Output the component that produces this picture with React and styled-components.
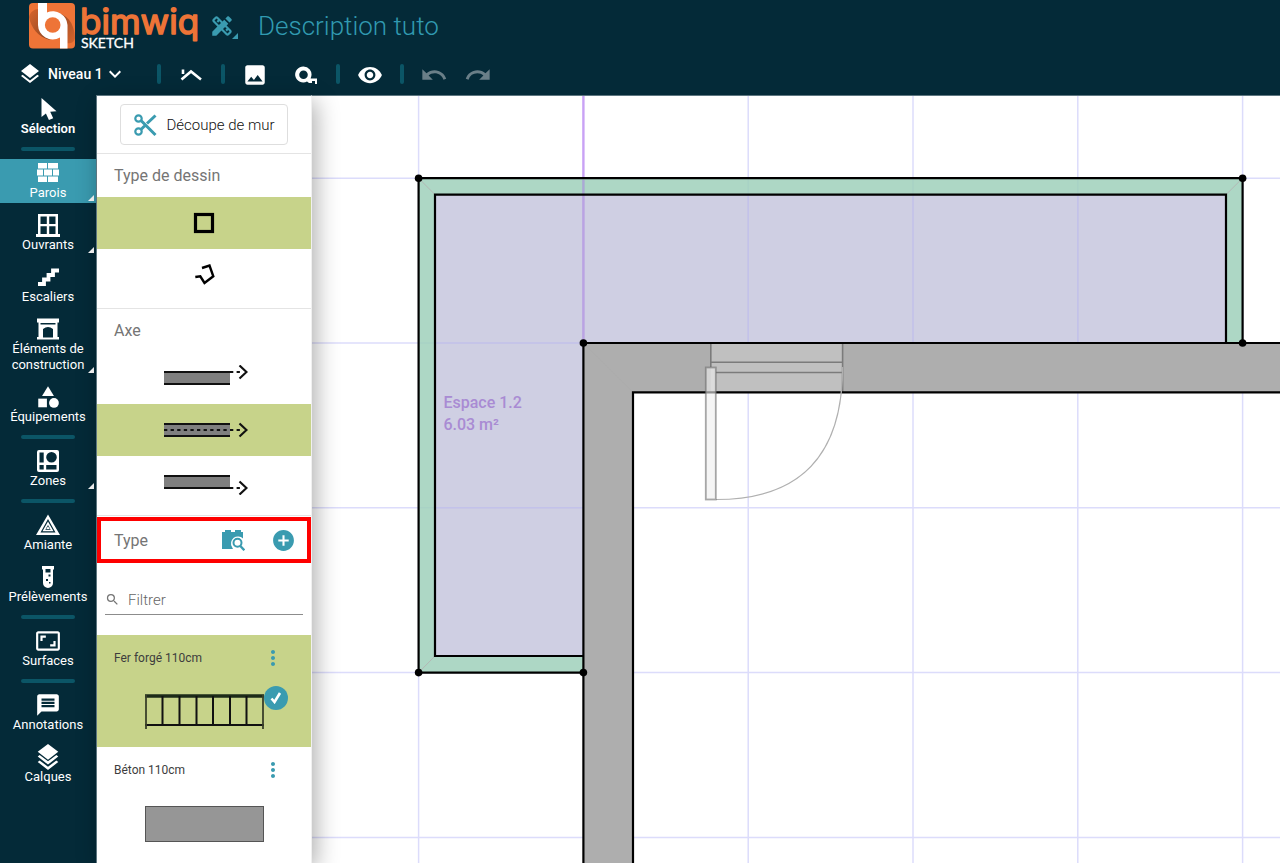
import { useState } from 'react'
import styled, { createGlobalStyle } from 'styled-components'
import {
    MdAddCircle,
    MdCategory,
    MdDesignServices,
    MdExpandMore,
    MdImage,
    MdLayers,
    MdMessage,
    MdMoreVert,
    MdOutlineAspectRatio,
    MdRedo,
    MdSearch,
    MdUndo,
    MdVisibility
} from 'react-icons/md'

const colors = {
    navy: '#042a38',
    teal: '#3a9bb0',
    tealDark: '#0b5566',
    orange: '#ee7437',
    green: '#c7d38a',
    grey: '#757575',
    line: '#e4e4e4',
    edge: '#5d7680'
}

const GlobalStyle = createGlobalStyle`
    *{
        box-sizing:border-box;
    }
    body{
        margin:0;
        overflow:hidden;
        font-family:Roboto, "Liberation Sans", sans-serif;
        font-size:14px;
        background:#fff;
    }
    button{
        font:inherit;
        color:inherit;
        border:none;
        background:none;
        padding:0;
        cursor:pointer;
    }
    svg{
        display:block;
        flex-shrink:0;
    }
`

const Page = styled.div`
    display:flex;
    flex-direction:column;
    height:100vh;
`
const Body = styled.div`
    display:flex;
    flex:1;
    min-height:0;
`

/* header */
const Header = styled.header`
    display:flex;
    flex-direction:column;
    color:#fff;
    background:${colors.navy};
`
const TopRow = styled.div`
    display:flex;
    align-items:center;
    gap:8px;
    height:52px;
    padding-left:29px;
`
const Logo = styled.a`
    display:flex;
    color:#fff;
    text-decoration:none;
`
const ModeButton = styled.button`
    position:relative;
    color:${colors.teal};
    padding-right:3px;
`
const Title = styled.h1`
    margin:0;
    margin-left:12px;
    font-size:26px;
    font-weight:300;
    color:#319ab1;
`
const Toolbar = styled.div`
    display:flex;
    align-items:center;
    gap:18px;
    height:43px;
    padding-left:18px;
`
const Group = styled.div`
    display:flex;
    align-items:center;
    gap:${props => props.$gap || 0}px;
`
const LevelButton = styled.button`
    display:flex;
    align-items:center;
    padding-right:12px;
    font-weight:500;
    span{
        margin-left:6px;
    }
`
const Separator = styled.span`
    width:4px;
    height:20px;
    border-radius:2px;
    background:${colors.tealDark};
`
const ToolButton = styled.button`
    display:flex;
    align-items:center;
    justify-content:center;
    width:24px;
    padding-top:2px;
    color:#fff;
    &:disabled{
        color:#6a7f88;
    }
`

/* left menu */
const Menu = styled.nav`
    display:flex;
    flex-direction:column;
    gap:8px;
    width:96px;
    flex-shrink:0;
    color:#fff;
    background:${colors.navy};
`
const MenuButton = styled.button`
    position:relative;
    display:flex;
    flex-direction:column;
    align-items:center;
    padding:2px 0;
    font-size:13px;
    line-height:16px;
    font-weight:${props => props.$bold ? 600 : 400};
    background:${props => props.$active ? colors.teal : 'transparent'};
`
const MenuIcon = styled.span`
    display:flex;
    align-items:center;
    justify-content:center;
    height:24px;
`
const MenuDivider = styled.hr`
    width:54px;
    height:4px;
    margin:0 auto;
    border:none;
    border-radius:2px;
    background:${colors.tealDark};
`
const Corner = styled.span`
    position:absolute;
    right:${props => props.$inset || 0}px;
    bottom:${props => props.$inset || 0}px;
    border-style:solid;
    border-width:0 0 6px 6px;
    border-color:transparent transparent currentColor transparent;
`

/* wall panel */
const Panel = styled.aside`
    position:relative;
    z-index:1;
    width:216px;
    flex-shrink:0;
    overflow:hidden;
    background:#fff;
    border-top:1px solid ${colors.edge};
    border-left:1px solid ${colors.edge};
    border-right:1px solid #f0f0f0;
    box-shadow:4px 6px 22px rgba(0, 0, 0, 0.32);
`
const Section = styled.section`
    padding-bottom:7px;
    border-bottom:1px solid ${colors.line};
`
const CutRow = styled.div`
    padding:8px 23px;
    border-bottom:1px solid ${colors.line};
`
const CutButton = styled.button`
    display:flex;
    align-items:center;
    justify-content:center;
    gap:9px;
    width:100%;
    height:41px;
    font-size:15px;
    font-weight:300;
    color:#111;
    border:1px solid #dedede;
    border-radius:4px;
`
const SectionTitle = styled.h2`
    margin:0;
    padding-left:17px;
    font-size:16px;
    line-height:44px;
    height:43px;
    font-weight:400;
    color:${colors.grey};
`
const Option = styled.button`
    display:flex;
    align-items:center;
    justify-content:center;
    width:100%;
    height:52px;
    background:${props => props.$active ? colors.green : '#fff'};
`
const TypeHeader = styled.div`
    display:flex;
    align-items:center;
    height:46px;
    margin-top:1px;
    padding-right:11px;
    border:4px solid #fe0000;
    color:${colors.teal};
    h2{
        flex:1;
        padding-left:13px;
    }
`
const TypeActions = styled.div`
    display:flex;
    gap:26px;
`
const Filter = styled.label`
    display:flex;
    align-items:center;
    gap:8px;
    height:30px;
    margin:22px 8px 20px;
    color:${colors.grey};
    border-bottom:1px solid #8c8c8c;
    input{
        flex:1;
        min-width:0;
        padding:0;
        font:inherit;
        font-size:15px;
        color:#333;
        border:none;
        outline:none;
        background:none;
    }
    input::placeholder{
        font-weight:300;
        color:#666;
        opacity:1;
    }
`
const Card = styled.article`
    height:112px;
    background:${props => props.$active ? colors.green : '#fff'};
`
const CardHeader = styled.div`
    display:flex;
    align-items:center;
    justify-content:space-between;
    height:45px;
    padding:0 26px 0 17px;
    font-size:12px;
    color:#3d3d3d;
    button{
        color:${colors.teal};
    }
`
const CardPreview = styled.button`
    position:relative;
    display:block;
    margin:14px auto 0;
`
const Check = styled.span`
    position:absolute;
    top:-8px;
    right:-24px;
    display:flex;
    align-items:center;
    justify-content:center;
    width:24px;
    height:24px;
    border-radius:50%;
    background:${colors.teal};
`

/* drawing */
const Canvas = styled.main`
    flex:1;
    min-width:0;
    border-top:1px solid ${colors.edge};
    background:#fff;
    svg{
        width:100%;
        height:100%;
    }
    text{
        font-size:16px;
        font-weight:500;
        fill:#a98bd3;
    }
`

const Icon = ({ children, size = 24 }) => (
    <svg width={size} height={size} viewBox="0 0 24 24" fill="currentColor" aria-hidden="true">
        {children}
    </svg>
)

const LogoMark = () => (
    <svg width="172" height="52" viewBox="0 0 172 52" role="img" aria-label="bimwiq sketch">
        <defs>
            <linearGradient id="fold" x1="0" y1="0" x2="1" y2="1">
                <stop offset="0" stopColor="#d9652c" />
                <stop offset="1" stopColor="#8a4522" />
            </linearGradient>
            <linearGradient id="fold2" x1="1" y1="1" x2="0" y2="0">
                <stop offset="0" stopColor="#d9652c" />
                <stop offset="1" stopColor="#8a4522" />
            </linearGradient>
        </defs>
        <rect y="3" width="46" height="45.500" rx="4" fill={colors.orange} />
        <path d="M0 17C2 28 9 37 21 40L10 26V9C5 9 1 12 0 17Z" fill="url(#fold)" />
        <path d="M46 38C45 22 38 14 25 12L36 26V43C41 44 45 43 46 38Z" fill="url(#fold2)" />
        <path d="M9 3H18V12.500A14.700 14.700 0 0 1 38.500 25V48.500H31V37.500A14.700 14.700 0 0 1 9 25Z" fill="#fff" />
        <circle cx="23.700" cy="25" r="7.800" fill={colors.orange} />
        <text
            x="51" y="34" fontFamily="Inter, sans-serif" fontSize="35"
            fill={colors.orange} stroke={colors.orange} strokeWidth="1.500" strokeLinejoin="round"
        >
            bimwiq
        </text>
        <text x="52" y="48" fontFamily="Lato, sans-serif" fontSize="14" fill="#fff" stroke="#fff" strokeWidth=".3">
            SKETCH
        </text>
    </svg>
)

const RoofIcon = () => (
    <Icon>
        <path d="M2.500 16.500 12 8.500 22 16.500M4 11V6.500" fill="none" stroke="currentColor" strokeWidth="2.600" />
    </Icon>
)
const TapeIcon = () => (
    <Icon>
        <path
            fillRule="evenodd"
            d="M9.500 3.500a8 8 0 0 1 7.800 9.800l-.7 2.200H23v5.500h-2v-3h-3v2h-3l-2-1.500a8 8 0 1 1-3.500-15Zm0 4a4.300 4.300 0 1 0 0 8.600 4.300 4.300 0 0 0 0-8.600Z"
        />
    </Icon>
)
const CursorIcon = () => (
    <Icon>
        <path d="M5.500 1v19l4.400-3.600 3 6.600 4.300-1.700-3-6.500 6.300-.6Z" />
    </Icon>
)
const BricksIcon = () => (
    <Icon>
        <path d="M2 2h9v5.400H2zM12 2h10v5.400H12zM1 8.400h6v6H1zM8 8.400h8v6H8zM17 8.400h6v6h-6zM2 15.400h9V21H2zM12 15.400h10V21H12z" />
    </Icon>
)
const WindowIcon = () => (
    <Icon>
        <path fillRule="evenodd" d="M2 1h20v20h2v3H0v-3h2ZM4.500 3.500V11h6.300V3.500ZM13.200 3.500V11h6.300V3.500ZM4.500 13.300V21h6.300v-7.700ZM13.200 13.300V21h6.300v-7.700Z" />
    </Icon>
)
const StairsIcon = () => (
    <Icon>
        <path d="M2 19h6v-4.500h4.500V10H17V5.500h6" fill="none" stroke="currentColor" strokeWidth="3.800" />
    </Icon>
)
const FireplaceIcon = () => (
    <Icon>
        <path fillRule="evenodd" d="M1 1.500h22v4h-1.500V20H23v2.500H1V20h1.500V5.500H1ZM7 20.500h10V12q-5-4-10 0ZM4.500 6v1.500h15V6Z" />
    </Icon>
)
const ZonesIcon = () => (
    <Icon>
        <path
            fillRule="evenodd"
            d="M3 1h18a2 2 0 0 1 2 2v18a2 2 0 0 1-2 2H3a2 2 0 0 1-2-2V3a2 2 0 0 1 2-2ZM3.500 3.500v10h4.200v-10ZM15.500 3A5.300 5.300 0 1 0 15.500 13.600 5.300 5.300 0 0 0 15.500 3ZM3.500 16v4.500h4.200V16ZM10.200 16v4.500h10.300V16Z"
        />
    </Icon>
)
const AsbestosIcon = () => (
    <Icon>
        <path fillRule="evenodd" d="M12 1.500 24 22H0ZM12 6 4.500 19.500h15ZM12 8.500l5.500 9.700h-11ZM12 12l-2.700 4.700h5.400Z" />
        <path d="M12 13.300 13.800 16h-3.600Z" />
    </Icon>
)
const TubeIcon = () => (
    <Icon>
        <path fillRule="evenodd" d="M6 1h12v3.500h-1V18a5 5 0 0 1-10 0V4.500H6ZM9.500 4v3.500h5V4Z" />
        <path d="M12.500 9.500h2v2h-2zM10 14h2v2h-2zM13 17h1.500v1.500H13z" fill={colors.navy} />
    </Icon>
)
const StackIcon = () => (
    <Icon size={26}>
        <path d="m12 0 9.500 7.200L12 14.500 2.500 7.200ZM4.300 10.200 12 16l7.700-5.800 1.800 1.400L12 19l-9.500-7.400ZM4.300 15.200 12 21l7.700-5.800 1.800 1.400L12 24l-9.500-7.400Z" />
    </Icon>
)
const ScissorsIcon = () => (
    <Icon>
        <g fill="none" stroke={colors.teal} strokeWidth="2.200">
            <circle cx="5.500" cy="5.500" r="3.200" />
            <circle cx="5.500" cy="18.500" r="3.200" />
            <path d="M8 7.500 22.500 22M8 16.500l4-4M14 10.500 22.500 2.500" strokeWidth="3" />
        </g>
    </Icon>
)
const BrickSearchIcon = () => (
    <Icon>
        <path d="M1 4h3V2h6v2h4V2h6v2h2v6.500a7 7 0 0 0-11 8.500l1 2H1Z" />
        <circle cx="16.500" cy="14.800" r="4" fill="none" stroke="currentColor" strokeWidth="2" />
        <path d="m19.300 18 4 4.300" stroke="currentColor" strokeWidth="2.400" />
    </Icon>
)
const SquareIcon = () => (
    <Icon>
        <rect x="3.500" y="3.500" width="17" height="17" fill="none" stroke="#000" strokeWidth="3.200" />
    </Icon>
)
const PolygonIcon = () => (
    <Icon>
        <path d="M10 5 17.500 2.500 21.300 13.300 12.500 20 8.300 13.300 3.300 14" fill="none" stroke="#000" strokeWidth="2.400" />
    </Icon>
)

// axis: position of the drawing axis in the wall (top, middle or bottom)
const AxisIcon = ({ axis }) => {
    const y = { top: 7, middle: 13, bottom: 19 }[axis]
    const dashStart = axis === 'middle' ? 0 : 66
    return (
        <svg width="88" height="26" viewBox="-4 0 88 26" aria-hidden="true">
            <rect y="7" width="66" height="12" fill="#7f7f7f" />
            <path d="M0 7H66M0 19H66" stroke="#111" strokeWidth="2" />
            <path d={`M${dashStart} ${y}H77`} stroke="#111" strokeWidth="2" strokeDasharray="3.300 3.300" />
            <path d={`M75.500 ${y - 6.500} 82.500 ${y}l-7 6.500`} fill="none" stroke="#111" strokeWidth="2.200" />
        </svg>
    )
}

const RailingPreview = () => (
    <svg width="119" height="36" viewBox="0 0 119 36" aria-hidden="true">
        <path d="M0 2H119" stroke="#1d2b18" strokeWidth="3.400" />
        <path d="M0 31H119" stroke="#111" strokeWidth="2" />
        <path d="M1 1V35M118 1V35" stroke="#3a402a" strokeWidth="1.800" />
        <path d="M17.500 2V31M34.500 2V31M51.500 2V31M68 2V31M85 2V31M101.500 2V31" stroke="#111" strokeWidth="2" />
    </svg>
)
const ConcretePreview = () => (
    <svg width="119" height="36" viewBox="0 0 119 36" aria-hidden="true">
        <rect x=".5" y=".5" width="118" height="35" fill="#969696" stroke="#555" />
    </svg>
)

const CELL = 164.8
const COLUMNS = [-1, 1, 2, 3, 4]
const ROWS = [-1, 0, 1, 2, 3]
const CORNERS = [[-1, -1], [4, -1], [0, 0], [4, 0], [-1, 2], [0, 2]]

// origin: corner of the concrete walls
const Plan = () => (
    <svg role="img" aria-label="Plan du niveau 1">
        <g transform="translate(271.400 247)">
            <g stroke="#dcdcfb" strokeWidth="1.500">
                {COLUMNS.map(i => <path key={i} d={`M${i * CELL} -300V1200`} />)}
                {ROWS.map(i => <path key={i} d={`M-400 ${i * CELL}H2400`} />)}
            </g>
            <path d="M0 -300V0" stroke="#c9a2f5" strokeWidth="2.400" />

            <path d="M-148.400 -148.400H642.600V0H0V313H-148.400Z" fill="#c3c3dc" fillOpacity=".8" />
            <path d="M-164.800 -164.800H659.200V0H642.600V-148.400H-148.400V313H0V329.600H-164.800Z" fill="#9fd0bb" fillOpacity=".85" />
            <path
                d="M164.800 -148V0M329.600 -148V0M494.400 -148V0M-148 0H0M-148 164.800H0"
                stroke="#c3c2ea" strokeWidth="1.500"
            />
            <path d="M0 -163V0" stroke="#b08ae6" strokeWidth="2.400" strokeOpacity=".5" />
            <path
                d="M-164.800 -164.800l16.400 16.400M659.200 -164.800l-16.600 16.400M-164.800 329.600l16.400 -16.600"
                stroke="#b3b8b5"
            />
            <path
                d="M0 329.600H-164.800V-164.800H659.200V0M0 313H-148.400V-148.400H642.600V0"
                fill="none" stroke="#000" strokeWidth="2.200"
            />

            <path d="M0 0H2400V49.400H49.600V1200H0Z" fill="#aeaeae" />
            <path d="M0 0 49.600 49.400" stroke="#a8a8a8" strokeWidth=".5" />

            <g stroke="#7b7b7b" strokeWidth="1.600">
                <rect x="127.400" y="0" width="131.800" height="49.400" fill="#c0c0c0" stroke="none" />
                <path d="M127.400 0V24M259.200 0V49M127.400 19.300H259.200M132.500 29.500H259.200" />
            </g>
            <path d="M0 1200V0H2400M49.600 1200V49.400H2400" fill="none" stroke="#000" strokeWidth="2.200" />
            <path d="M259.200 24Q259.200 156.500 132.500 156.500" fill="none" stroke="#b0b0b0" strokeWidth="1.200" />
            <rect
                x="122.400" y="24.500" width="10" height="132"
                fill="#eee" fillOpacity=".6" stroke="#6e6e6e" strokeOpacity=".6" strokeWidth="1.800"
            />

            {CORNERS.map(([x, y]) => (
                <circle key={`${x},${y}`} cx={x * CELL} cy={y * CELL} r="3.800" />
            ))}

            <text x="-140" y="65">Espace 1.2</text>
            <text x="-140" y="87">6.03 m²</text>
        </g>
    </svg>
)

const MENU = [
    [{ label: 'Sélection', icon: CursorIcon, bold: true }],
    [
        { label: 'Parois', icon: BricksIcon, more: true },
        { label: 'Ouvrants', icon: WindowIcon, more: true },
        { label: 'Escaliers', icon: StairsIcon },
        { label: 'Éléments de construction', icon: FireplaceIcon, more: true },
        { label: 'Équipements', icon: MdCategory }
    ],
    [{ label: 'Zones', icon: ZonesIcon, more: true }],
    [
        { label: 'Amiante', icon: AsbestosIcon },
        { label: 'Prélèvements', icon: TubeIcon }
    ],
    [{ label: 'Surfaces', icon: MdOutlineAspectRatio }],
    [
        { label: 'Annotations', icon: MdMessage },
        { label: 'Calques', icon: StackIcon }
    ]
]

const WALL_TYPES = [
    { name: 'Fer forgé 110cm', preview: RailingPreview },
    { name: 'Béton 110cm', preview: ConcretePreview }
]

const SideMenu = ({ active, onSelect }) => (
    <Menu>
        {MENU.flatMap((group, index) => [
            index > 0 && <MenuDivider key={`divider${index}`} />,
            ...group.map(({ label, icon: ItemIcon, bold, more }) => (
                <MenuButton
                    key={label}
                    $bold={bold}
                    $active={active === label}
                    onClick={() => onSelect(label)}
                >
                    <MenuIcon><ItemIcon size={26} /></MenuIcon>
                    {label}
                    {more ? <Corner $inset={2} /> : null}
                </MenuButton>
            ))
        ])}
    </Menu>
)

const WallPanel = () => {
    const [shape, setShape] = useState('square')
    const [axis, setAxis] = useState('middle')
    const [type, setType] = useState('Fer forgé 110cm')
    const [filter, setFilter] = useState('')

    return (
        <Panel>
            <CutRow>
                <CutButton><ScissorsIcon />Découpe de mur</CutButton>
            </CutRow>
            <Section>
                <SectionTitle>Type de dessin</SectionTitle>
                <Option aria-label="Rectangle" $active={shape === 'square'} onClick={() => setShape('square')}>
                    <SquareIcon />
                </Option>
                <Option aria-label="Polygone" $active={shape === 'polygon'} onClick={() => setShape('polygon')}>
                    <PolygonIcon />
                </Option>
            </Section>
            <Section>
                <SectionTitle>Axe</SectionTitle>
                {['top', 'middle', 'bottom'].map(item => (
                    <Option key={item} aria-label={item} $active={axis === item} onClick={() => setAxis(item)}>
                        <AxisIcon axis={item} />
                    </Option>
                ))}
            </Section>
            <TypeHeader>
                <SectionTitle>Type</SectionTitle>
                <TypeActions>
                    <button aria-label="Bibliothèque"><BrickSearchIcon /></button>
                    <button aria-label="Ajouter"><MdAddCircle size={25} /></button>
                </TypeActions>
            </TypeHeader>
            <Filter>
                <MdSearch size={15} />
                <input
                    aria-label="Filtrer"
                    placeholder="Filtrer"
                    value={filter}
                    onChange={e => setFilter(e.target.value)}
                />
            </Filter>
            {WALL_TYPES.filter(({ name }) => name.toLowerCase().includes(filter.toLowerCase())).map(
                ({ name, preview: Preview }) => (
                    <Card key={name} $active={type === name}>
                        <CardHeader>
                            {name}
                            <button aria-label="Options"><MdMoreVert size={24} /></button>
                        </CardHeader>
                        <CardPreview aria-label={name} onClick={() => setType(name)}>
                            <Preview />
                            {type === name ? (
                                <Check>
                                    <svg width="12" height="12" viewBox="0 0 12 12">
                                        <path d="M1.500 6.500 4.500 10 10 1" fill="none" stroke="#fff" strokeWidth="2.600" />
                                    </svg>
                                </Check>
                            ) : null}
                        </CardPreview>
                    </Card>
                )
            )}
        </Panel>
    )
}

const App = () => {
    const [active, setActive] = useState('Parois')

    return (
        <Page>
            <GlobalStyle />
            <Header>
                <TopRow>
                    <Logo href="#"><LogoMark /></Logo>
                    <ModeButton aria-label="Mode">
                        <MdDesignServices size={26} />
                        <Corner />
                    </ModeButton>
                    <Title>Description tuto</Title>
                </TopRow>
                <Toolbar>
                    <LevelButton>
                        <MdLayers size={24} />
                        <span>Niveau 1</span>
                        <MdExpandMore size={24} />
                    </LevelButton>
                    <Separator />
                    <ToolButton aria-label="Toiture"><RoofIcon /></ToolButton>
                    <Separator />
                    <Group $gap={27}>
                        <ToolButton aria-label="Image"><MdImage size={26} /></ToolButton>
                        <ToolButton aria-label="Mesure"><TapeIcon /></ToolButton>
                    </Group>
                    <Separator />
                    <ToolButton aria-label="Affichage"><MdVisibility size={26} /></ToolButton>
                    <Separator />
                    <Group $gap={20}>
                        <ToolButton aria-label="Annuler" disabled><MdUndo size={28} /></ToolButton>
                        <ToolButton aria-label="Rétablir" disabled><MdRedo size={28} /></ToolButton>
                    </Group>
                </Toolbar>
            </Header>
            <Body>
                <SideMenu active={active} onSelect={setActive} />
                <WallPanel />
                <Canvas><Plan /></Canvas>
            </Body>
        </Page>
    )
}

export default App
